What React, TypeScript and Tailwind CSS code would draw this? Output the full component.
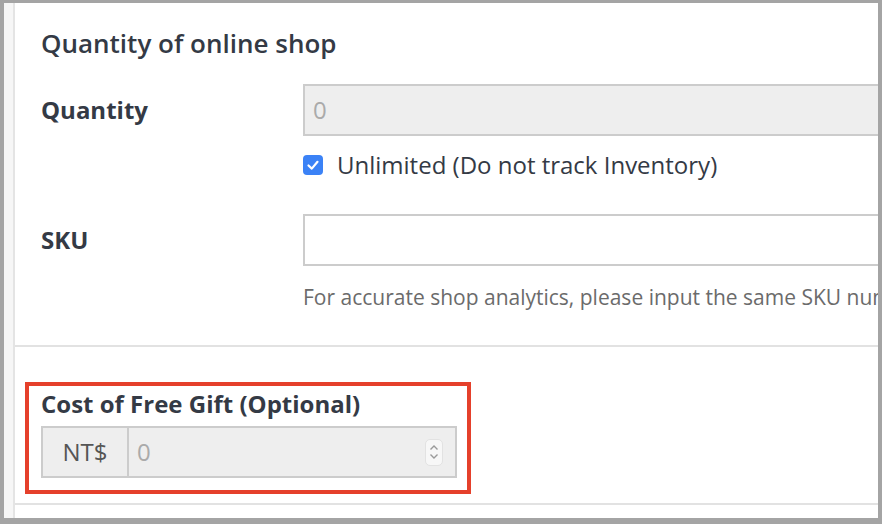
import React from 'react';

const font = { fontFamily: '"Open Sans", "Noto Sans", sans-serif' };

/**
 * Up/down spinner drawn on the number input.
 */
const Spinner: React.FC = () => (
  <div className="flex flex-col items-center justify-center w-[18px] h-[27px] rounded-[5px] bg-[#f7f7f7] border border-[#e2e2e2]">
    <svg width="10" height="7" viewBox="0 0 10 7" className="mb-[2px]">
      <path d="M1.5 5.5 L5 2 L8.5 5.5" fill="none" stroke="#9a9a9a" strokeWidth="1.4" />
    </svg>
    <svg width="10" height="7" viewBox="0 0 10 7">
      <path d="M1.5 1.5 L5 5 L8.5 1.5" fill="none" stroke="#9a9a9a" strokeWidth="1.4" />
    </svg>
  </div>
);

export default function App() {
  return (
    <div
      style={font}
      className="w-[882px] h-[524px] bg-[#a4a4a4] pt-[3px] pl-[4px] pr-[4px] pb-[6px] overflow-hidden"
    >
      <div className="flex h-full overflow-hidden">
        {/* left gutter */}
        <div className="w-[11px] shrink-0 bg-[#f6f6f6] border-r-2 border-[#e4e4e4]" />

        <div className="flex-1 bg-white overflow-hidden">
          {/* Quantity section */}
          <section className="pl-[26px] pt-[23px] h-[344px] border-b-2 border-[#e2e2e2]">
            <h2 className="text-[26px] font-semibold text-[#343a45] leading-[34px]">
              Quantity of online shop
            </h2>

            <div className="flex mt-[24px]">
              <label className="w-[262px] shrink-0 text-[24px] font-bold text-[#343a45] leading-[52px]">
                Quantity
              </label>
              <div className="w-[620px] shrink-0">
                <div className="h-[52px] bg-[#eeeeee] border-2 border-[#cccccc] flex items-center pl-[8px] text-[24px] text-[#aaaaaa]">
                  0
                </div>
                <div className="flex items-center mt-[17px] h-[24px]">
                  <span className="w-[20px] h-[20px] rounded-[4px] bg-[#3b82f6] flex items-center justify-center">
                    <svg width="14" height="14" viewBox="0 0 14 14">
                      <path d="M2.5 7.5 L5.8 10.6 L11.5 3.8" fill="none" stroke="white" strokeWidth="2.2" strokeLinecap="round" strokeLinejoin="round" />
                    </svg>
                  </span>
                  <span className="ml-[14px] text-[24px] text-[#343a45] whitespace-nowrap">
                    Unlimited (Do not track Inventory)
                  </span>
                </div>
              </div>
            </div>

            <div className="flex mt-[37px]">
              <label className="w-[262px] shrink-0 text-[24px] font-bold text-[#343a45] leading-[52px]">
                SKU
              </label>
              <div className="w-[620px] shrink-0">
                <div className="h-[52px] bg-white border-2 border-[#cccccc]" />
                <p className="mt-[18px] text-[21px] text-[#6b6b6b] whitespace-nowrap leading-[26px]">
                  For accurate shop analytics, please input the same SKU number
                </p>
              </div>
            </div>
          </section>

          {/* Free gift cost */}
          <section className="pl-[10px] pt-[35px] h-[158px] border-b-2 border-[#e2e2e2]">
            <div className="w-[446px] h-[112px] border-[4px] border-[#e5402b] pl-[12px] pt-[2px]">
              <h3 className="text-[24px] font-bold text-[#343a45] leading-[32px]">
                Cost of Free Gift (Optional)
              </h3>
              <div className="flex mt-[6px] w-[416px] h-[52px] border-2 border-[#cccccc] bg-[#eeeeee]">
                <div className="w-[86px] flex items-center justify-center border-r-2 border-[#cccccc] text-[24px] text-[#555555]">
                  NT$
                </div>
                <div className="flex-1 flex items-center justify-between pl-[8px] pr-[12px] text-[24px] text-[#aaaaaa]">
                  <span>0</span>
                  <Spinner />
                </div>
              </div>
            </div>
          </section>
        </div>
      </div>
    </div>
  );
}
